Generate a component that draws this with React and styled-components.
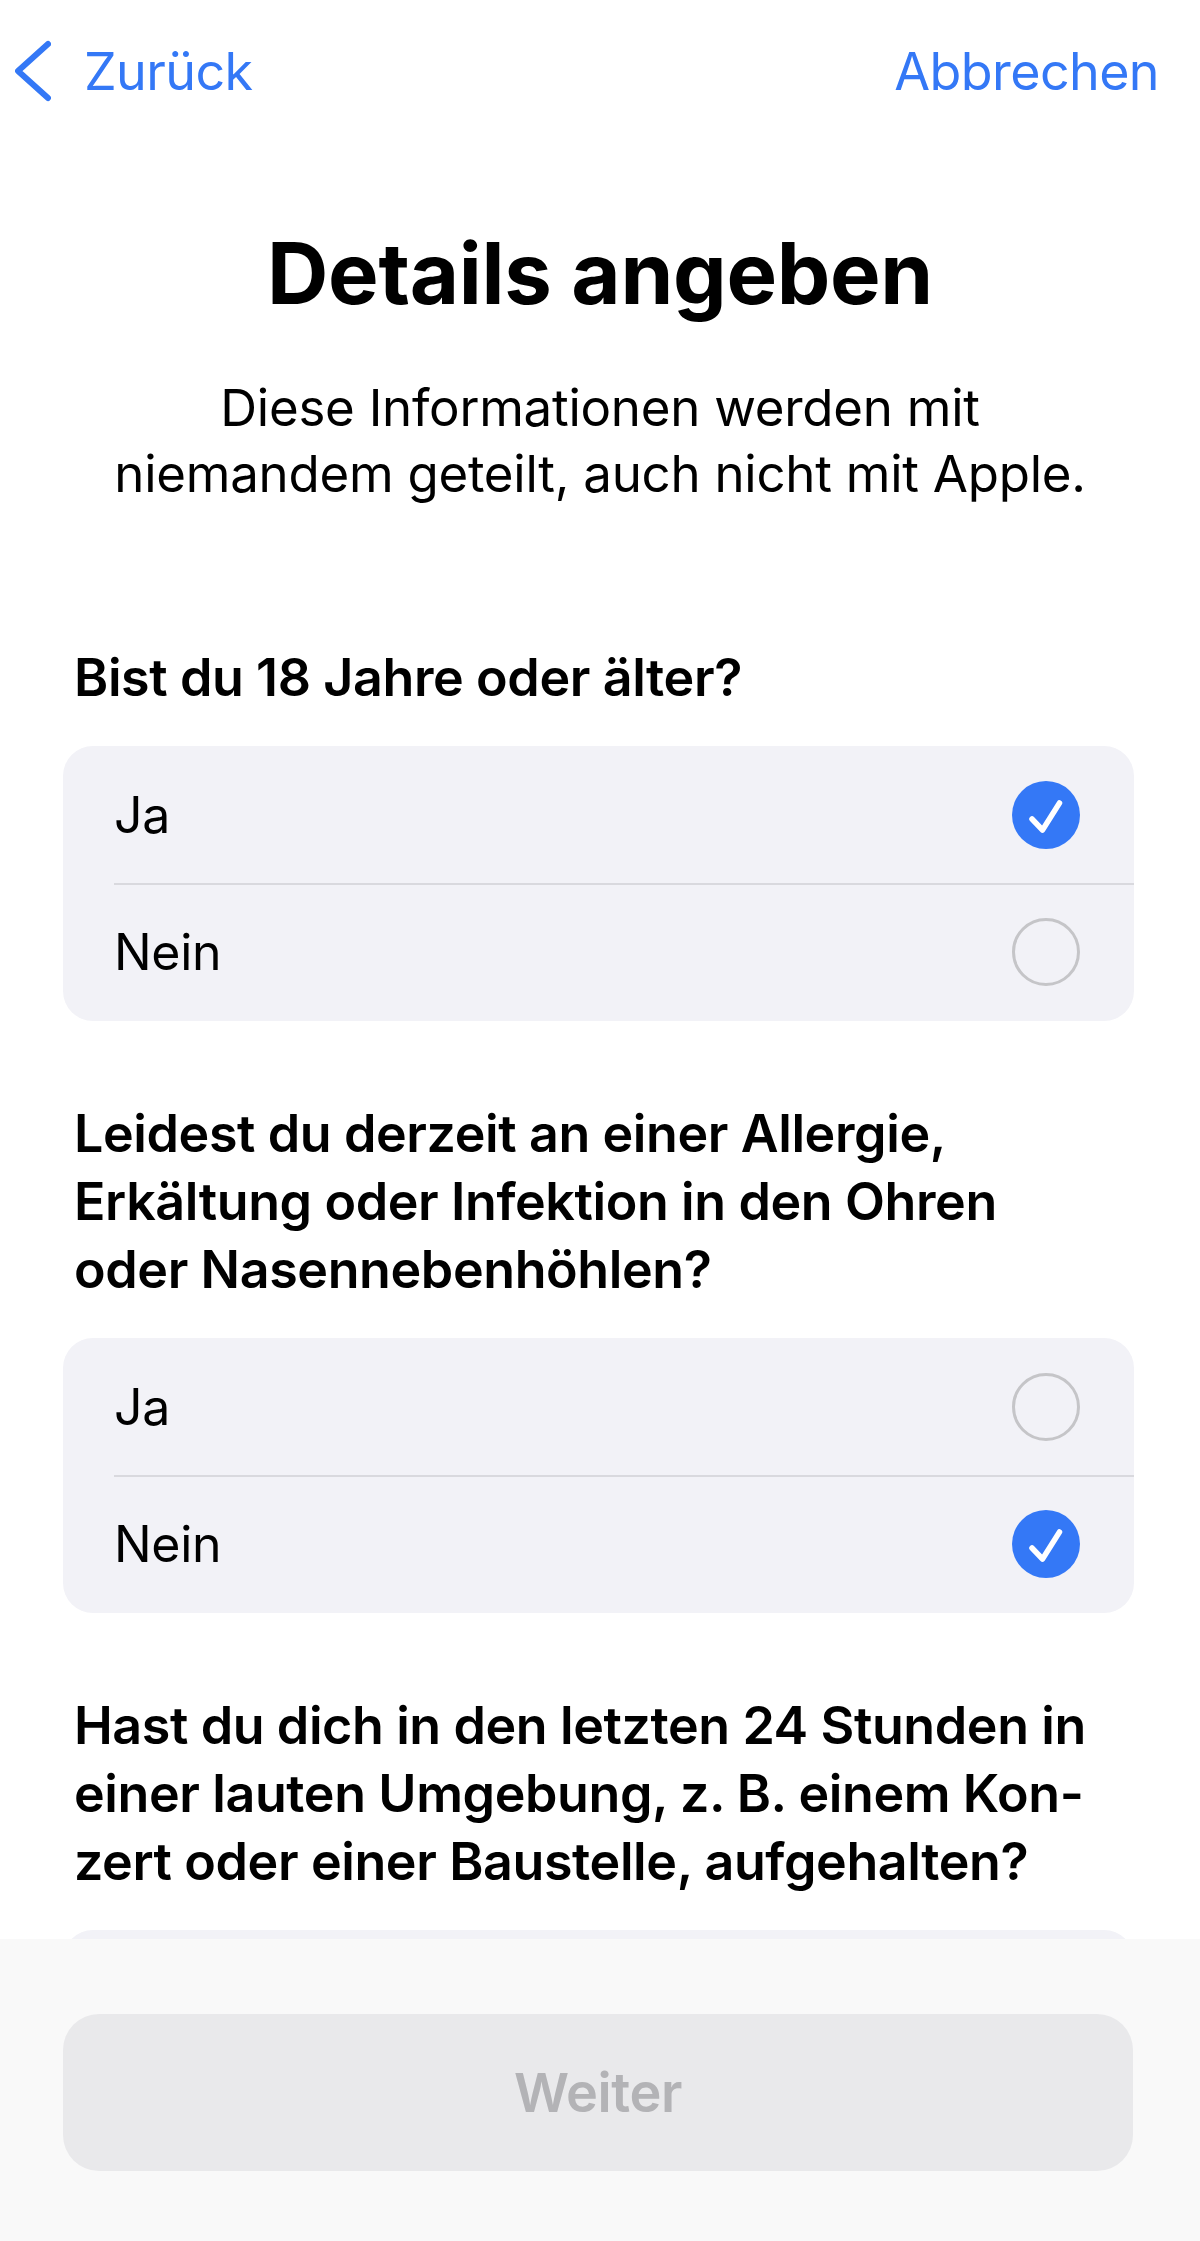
import React from "react";
import styled, { createGlobalStyle } from "styled-components";

const Global = createGlobalStyle`
  html, body { margin: 0; padding: 0; background: #ffffff; }
  body {
    font-family: Inter, "Noto Sans", "Liberation Sans", sans-serif;
    color: #000;
    -webkit-font-smoothing: antialiased;
  }
`;

const Page = styled.div`
  width: 1200px;
  min-height: 2241px;
  padding-bottom: 320px;
  box-sizing: border-box;
`;

const Nav = styled.nav`
  height: 142px;
  display: flex;
  align-items: center;
  justify-content: space-between;
  padding: 0 41px 0 15px;
  box-sizing: border-box;
`;

const NavButton = styled.div`
  display: flex;
  align-items: center;
  gap: ${(p) => p.$gap || 0}px;
  color: #3478f6;
  font-size: 52px;
  font-weight: 400;
  letter-spacing: -0.6px;
`;

const Title = styled.h1`
  margin: 82px 0 0;
  text-align: center;
  font-size: 85px;
  line-height: 100px;
  font-weight: 700;
  letter-spacing: -0.3px;
`;

const Subtitle = styled.p`
  margin: 51px 0 0;
  text-align: center;
  font-size: 51px;
  line-height: 66px;
  font-weight: 400;
  letter-spacing: -0.25px;
`;

const Section = styled.section`
  margin-top: ${(p) => p.$top}px;
  padding: 0 66px 0 63px;
`;

const Question = styled.h2`
  margin: 0 0 ${(p) => p.$gap}px 11px;
  font-size: 52px;
  line-height: 68px;
  font-weight: 600;
  letter-spacing: -0.4px;
`;

const Card = styled.div`
  background: #f2f2f7;
  border-radius: 30px;
  overflow: hidden;
`;

const Row = styled.div`
  height: 137px;
  display: flex;
  align-items: center;
  justify-content: space-between;
  padding: 0 54px 0 51px;
  position: relative;
  font-size: 50px;
  font-weight: 400;
  letter-spacing: -0.3px;
  & + & {
    height: 138px;
  }
  & + &::before {
    content: "";
    position: absolute;
    top: 0;
    left: 51px;
    right: 0;
    height: 2px;
    background: #d9d9de;
  }
`;

const Radio = styled.span`
  width: 68px;
  height: 68px;
  border-radius: 50%;
  box-sizing: border-box;
  display: flex;
  align-items: center;
  justify-content: center;
  background: ${(p) => (p.$on ? "#3478f6" : "transparent")};
  border: ${(p) => (p.$on ? "none" : "3px solid #c5c5c8")};
`;

const BottomBar = styled.div`
  position: fixed;
  left: 0;
  right: 0;
  bottom: 0;
  height: 302px;
  background: #f9f9f9;
  padding: 75px 67px 0 63px;
  box-sizing: border-box;
`;

const PrimaryButton = styled.button`
  width: 100%;
  height: 157px;
  border: none;
  border-radius: 36px;
  background: #e9e9eb;
  color: #b3b3b6;
  font-family: inherit;
  font-size: 54px;
  font-weight: 600;
  letter-spacing: -0.4px;
  padding: 0;
`;

const Chevron = () => (
  <svg width="36" height="62" viewBox="0 0 36 62" fill="none">
    <polyline
      points="33,4 3,31 33,58"
      stroke="#3478f6"
      strokeWidth="6"
      strokeLinecap="round"
      strokeLinejoin="round"
    />
  </svg>
);

const Check = () => (
  <svg width="68" height="68" viewBox="0 0 68 68" fill="none">
    <polyline
      points="20,38 30.5,49 47.5,22"
      stroke="#ffffff"
      strokeWidth="5.5"
      strokeLinecap="round"
      strokeLinejoin="round"
    />
  </svg>
);

const Choice = ({ label, on }) => (
  <Row>
    <span>{label}</span>
    <Radio $on={on}>{on && <Check />}</Radio>
  </Row>
);

const questions = [
  {
    lines: ["Bist du 18 Jahre oder älter?"],
    answer: "Ja",
    top: 137,
    gap: 34,
  },
  {
    lines: [
      "Leidest du derzeit an einer Allergie,",
      "Erkältung oder Infektion in den Ohren",
      "oder Nasennebenhöhlen?",
    ],
    answer: "Nein",
    top: 79,
    gap: 34,
  },
  {
    lines: [
      "Hast du dich in den letzten 24 Stunden in",
      "einer lauten Umgebung, z. B. einem Kon-",
      "zert oder einer Baustelle, aufgehalten?",
    ],
    answer: null,
    top: 79,
    gap: 34,
  },
];

export default function App() {
  return (
    <Page>
      <Global />
      <Nav>
        <NavButton $gap={33}>
          <Chevron />
          <span>Zurück</span>
        </NavButton>
        <NavButton>Abbrechen</NavButton>
      </Nav>
      <Title>Details angeben</Title>
      <Subtitle>
        Diese Informationen werden mit
        <br />
        niemandem geteilt, auch nicht mit Apple.
      </Subtitle>
      {questions.map((q, i) => (
        <Section key={i} $top={q.top}>
          <Question $gap={q.gap}>
            {q.lines.map((l, j) => (
              <React.Fragment key={j}>
                {l}
                {j < q.lines.length - 1 && <br />}
              </React.Fragment>
            ))}
          </Question>
          <Card>
            <Choice label="Ja" on={q.answer === "Ja"} />
            <Choice label="Nein" on={q.answer === "Nein"} />
          </Card>
        </Section>
      ))}
      <BottomBar>
        <PrimaryButton>Weiter</PrimaryButton>
      </BottomBar>
    </Page>
  );
}
